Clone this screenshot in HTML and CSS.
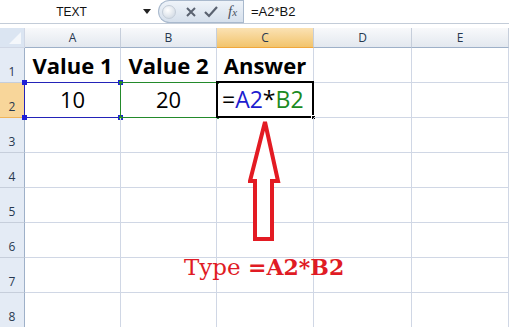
FILE: index.html
```html
<!DOCTYPE html>
<html lang="en">
<head>
    <meta charset="UTF-8">
    <title>Multiply cells</title>
    <link rel="stylesheet" href="styles.css">
</head>
<body>
    <div class="formula-bar">
        <div class="name-box">
            <span class="name">TEXT</span>
            <svg class="caret" width="8" height="5" viewBox="0 0 8 5"><path d="M0 0H8L4 5Z"/></svg>
        </div>
        <div class="fx-buttons">
            <span class="dot"></span>
            <svg class="btn" width="12" height="12" viewBox="0 0 12 12"><path d="M2 2L10 10M10 2L2 10" stroke="#5a6270" stroke-width="2"/></svg>
            <svg class="btn" width="14" height="12" viewBox="0 0 14 12"><path d="M1 6L5 10L13 1" stroke="#5a6270" stroke-width="2.2" fill="none"/></svg>
            <span class="fx">f<i>x</i></span>
        </div>
        <div class="formula">=A2*B2</div>
    </div>

    <div class="sheet">
        <div class="corner"></div>
        <div class="col-head">A</div>
        <div class="col-head">B</div>
        <div class="col-head active">C</div>
        <div class="col-head">D</div>
        <div class="col-head">E</div>

        <div class="row-head">1</div>
        <div class="cell title">Value 1</div>
        <div class="cell title">Value 2</div>
        <div class="cell title">Answer</div>
        <div class="cell"></div>
        <div class="cell"></div>

        <div class="row-head active">2</div>
        <div class="cell num ref-blue">10<i class="h tl"></i><i class="h tr"></i><i class="h bl"></i><i class="h br"></i></div>
        <div class="cell num ref-green">20<i class="h tl"></i><i class="h tr"></i><i class="h bl"></i><i class="h br"></i></div>
        <div class="cell editing">=<span class="blue">A2</span>*<span class="green">B2</span><i class="fill"></i></div>
        <div class="cell"></div>
        <div class="cell"></div>

        <div class="row-head">3</div>
        <div class="cell"></div><div class="cell"></div><div class="cell"></div><div class="cell"></div><div class="cell"></div>
        <div class="row-head">4</div>
        <div class="cell"></div><div class="cell"></div><div class="cell"></div><div class="cell"></div><div class="cell"></div>
        <div class="row-head">5</div>
        <div class="cell"></div><div class="cell"></div><div class="cell"></div><div class="cell"></div><div class="cell"></div>
        <div class="row-head">6</div>
        <div class="cell"></div><div class="cell"></div><div class="cell"></div><div class="cell"></div><div class="cell"></div>
        <div class="row-head">7</div>
        <div class="cell"></div><div class="cell"></div><div class="cell"></div><div class="cell"></div><div class="cell"></div>
        <div class="row-head">8</div>
        <div class="cell"></div><div class="cell"></div><div class="cell"></div><div class="cell"></div><div class="cell"></div>
    </div>

    <svg class="arrow" width="40" height="130" viewBox="0 0 40 130">
        <path d="M17 4L30 63H24V121H7V63H2Z" fill="#fff" stroke="#e31b23" stroke-width="4" stroke-linejoin="miter"/>
    </svg>

    <div class="note">Type <b>=A2*B2</b></div>
</body>
</html>
```

FILE: styles.css
```css
body {
    margin: 0;
    background-color: #fff;
    font-family: "Liberation Sans", Arial, sans-serif;
    overflow: hidden;
    width: 509px;
    height: 327px;
}

.formula-bar {
    display: flex;
    height: 23px;
    border-bottom: 1px solid #c3ccd8;
    margin-bottom: 4px;
}

.name-box {
    width: 156px;
    display: flex;
    align-items: center;
    background-color: #fff;
}

.name {
    flex: 1;
    text-align: center;
    font-size: 12px;
    color: #111;
}

.caret {
    margin-right: 5px;
    fill: #222;
}

.fx-buttons {
    width: 85px;
    margin-left: 2px;
    display: flex;
    align-items: center;
    gap: 7px;
    border: 1px solid #a9b9cd;
    border-right: none;
    border-radius: 12px 0 0 12px;
    background: linear-gradient(#eef3f9, #d6e0ec);
    box-sizing: border-box;
    padding-left: 3px;
}

.dot {
    width: 12px;
    height: 12px;
    border-radius: 50%;
    background: radial-gradient(circle at 40% 35%, #fff, #c9d3df);
    border: 1px solid #c4cdd8;
    margin-right: 2px;
}

.btn {
    display: block;
}

.fx {
    font-family: "Liberation Serif", serif;
    font-style: italic;
    font-size: 15px;
    color: #4a5260;
    margin-left: 3px;
}

.fx i {
    font-size: 11px;
}

.formula {
    flex: 1;
    border-left: 1px solid #a9b9cd;
    padding-left: 7px;
    font-size: 13px;
    line-height: 23px;
    color: #111;
}

.sheet {
    display: grid;
    grid-template-columns: 25px 96px 96px 97px 98px 97px;
    grid-template-rows: 20px repeat(8, 35px);
}

.sheet > div {
    box-sizing: border-box;
    border-right: 1px solid #d0d7e5;
    border-bottom: 1px solid #d0d7e5;
}

.corner {
    background-color: #dbe5f2;
    position: relative;
}

.corner::after {
    content: "";
    position: absolute;
    left: 9px;
    top: 4px;
    width: 12px;
    height: 12px;
    background-color: #f4f7fb;
    clip-path: polygon(100% 0, 100% 100%, 0 100%);
}

.col-head {
    background: linear-gradient(#f8f9fb, #e3e8ef);
    border-right-color: #c6cedb !important;
    border-bottom-color: #9eb0c8 !important;
    text-align: center;
    font-family: "Open Sans", sans-serif;
    font-size: 12px;
    line-height: 19px;
    color: #27384f;
}

.col-head.active {
    background: linear-gradient(#fbe2b4, #f2c46c);
    border-bottom-color: #f0a73c !important;
}

.row-head {
    background-color: #e4ebf5;
    border-right-color: #9eb0c8 !important;
    border-bottom-color: #c6cedb !important;
    font-family: "Open Sans", sans-serif;
    font-size: 12px;
    color: #27384f;
    text-align: center;
    padding-top: 15px;
}

.row-head.active {
    background-color: #f8d69a;
    border-bottom-color: #f0b45a !important;
}

.cell {
    position: relative;
    font-family: "Open Sans", sans-serif;
    font-size: 22px;
    color: #000;
    white-space: nowrap;
}

.title {
    font-weight: bold;
    text-align: center;
    line-height: 34px;
}

.num {
    text-align: center;
    line-height: 33px;
}

.editing {
    padding-left: 5px;
    font-size: 23px;
    line-height: 33px;
}

.blue {
    color: #1c1ccf;
}

.green {
    color: #1a8a22;
}

.ref-blue::before,
.ref-green::before,
.editing::before {
    content: "";
    position: absolute;
    top: -1px;
    left: -1px;
    right: -1px;
    bottom: -1px;
    border: 1px solid #2323b8;
}

.ref-green::before {
    border-color: #238a2b;
}

.editing::before {
    border: 2px solid #000;
    top: -2px;
    left: -1px;
}

.h {
    position: absolute;
    width: 5px;
    height: 5px;
    background-color: #1f1fd6;
}

.ref-green .h {
    background-color: #238a2b;
    width: 3px;
    height: 3px;
}

.tl { top: -3px; left: -3px; }
.tr { top: -3px; right: -3px; }
.bl { bottom: -3px; left: -3px; }
.br { bottom: -3px; right: -3px; }

.ref-green .tl, .ref-green .bl { left: -2px; }
.ref-green .tl, .ref-green .tr { top: -2px; }
.ref-green .bl, .ref-green .br { bottom: -2px; }

.fill {
    position: absolute;
    right: -3px;
    bottom: -3px;
    width: 5px;
    height: 5px;
    background-color: #000;
    border: 1px solid #fff;
    box-sizing: border-box;
}

.arrow {
    position: absolute;
    left: 248px;
    top: 118px;
}

.note {
    position: absolute;
    left: 184px;
    top: 254px;
    font-family: "DejaVu Serif", serif;
    font-size: 23px;
    color: #e01b24;
    white-space: nowrap;
}

.note b {
    font-size: 22px;
}
```
